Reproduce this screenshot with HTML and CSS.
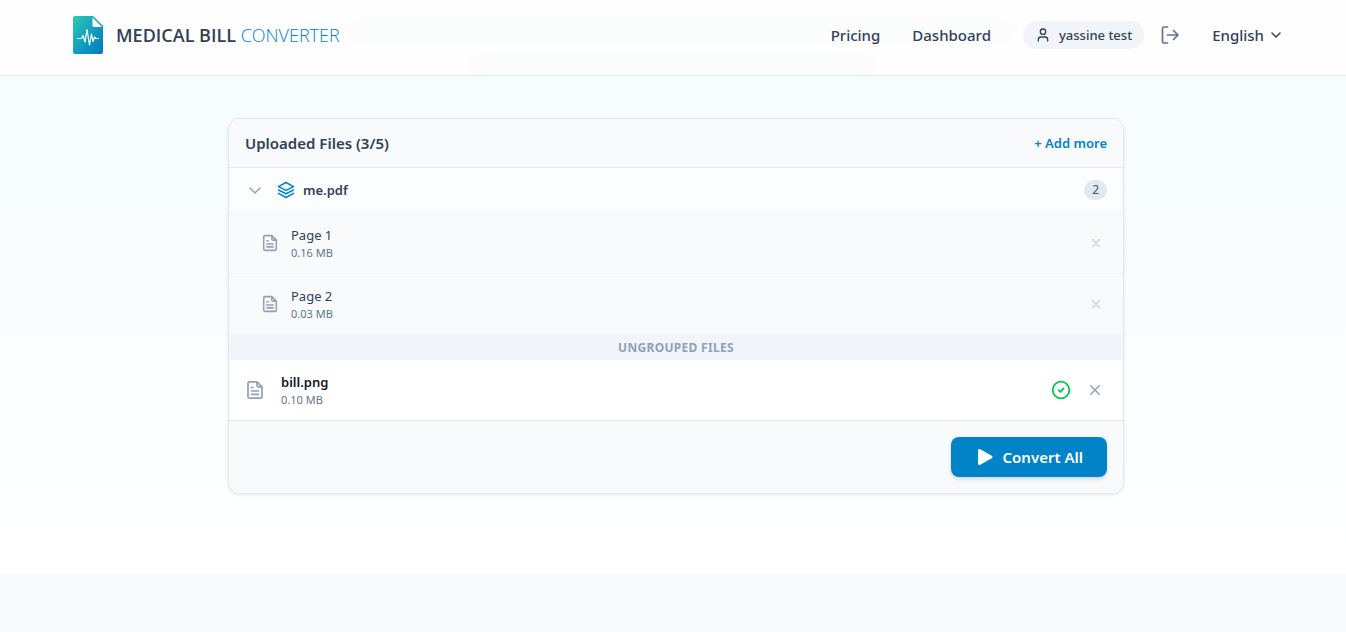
FILE: index.html
```html
<!DOCTYPE html>
<html lang="en">
    <head>
        <meta charset="utf-8">
        <meta name="viewport" content="width=device-width, initial-scale=1">
        <title>Medical Bill Converter</title>
        <link rel="stylesheet" href="styles.css">
    </head>
    <body>
        <header class="header">
            <div class="header-inner">
                <a class="logo" href="#">
                    <svg class="logo-icon" width="32" height="40" viewBox="0 0 32 40" aria-hidden="true">
                        <defs>
                            <linearGradient id="logoFill" x1="0" y1="0" x2="1" y2="1">
                                <stop offset="0" stop-color="#2dcbb4"/>
                                <stop offset="0.5" stop-color="#12a0bd"/>
                                <stop offset="1" stop-color="#0277c8"/>
                            </linearGradient>
                        </defs>
                        <path d="M3 1h18l10 10v26a2 2 0 0 1-2 2H3a2 2 0 0 1-2-2V3a2 2 0 0 1 2-2z" fill="url(#logoFill)"/>
                        <path d="M20.500 2.500v8a1.500 1.500 0 0 0 1.500 1.500h8z" fill="#ffffff"/>
                        <path d="M5.500 23.500H9.500L11 20.500 13 27 15 14.500 17.500 30 19.500 19 21 26.500 22.500 22 24 23.500H26.500" fill="none" stroke="#ffffff" stroke-width="1.200" stroke-linecap="round" stroke-linejoin="round"/>
                    </svg>
                    <span class="logo-text">MEDICAL BILL <span class="logo-light">CONVERTER</span></span>
                </a>
                <nav class="nav">
                    <a class="nav-link" href="#">Pricing</a>
                    <a class="nav-link" href="#">Dashboard</a>
                    <div class="account">
                        <a class="user" href="#">
                            <svg width="16" height="16" viewBox="0 0 24 24" class="icon" aria-hidden="true">
                                <path d="M19 21v-2a4 4 0 0 0-4-4H9a4 4 0 0 0-4 4v2"/>
                                <circle cx="12" cy="7" r="4"/>
                            </svg>
                            yassine test
                        </a>
                        <button class="logout" aria-label="Log out">
                            <svg width="20" height="20" viewBox="0 0 20 20" class="icon" aria-hidden="true">
                                <path d="M7.500 2H4a1.500 1.500 0 0 0-1.500 1.500v13A1.500 1.500 0 0 0 4 18h3.500M7.500 10H18M13.500 5.500L18 10l-4.500 4.500"/>
                            </svg>
                        </button>
                    </div>
                    <button class="language">
                        English
                        <svg width="16" height="16" viewBox="0 0 16 16" class="icon" aria-hidden="true">
                            <path d="M4 6l4 4 4-4"/>
                        </svg>
                    </button>
                </nav>
            </div>
        </header>

        <main class="main">
            <section class="card">
                <div class="card-header">
                    <h2 class="card-title">Uploaded Files (3/5)</h2>
                    <button class="add-more">+ Add more</button>
                </div>

                <div class="group">
                    <button class="toggle" aria-label="Collapse me.pdf">
                        <svg width="20" height="20" viewBox="0 0 20 20" class="icon" aria-hidden="true">
                            <path d="M5 8l5 5 5-5"/>
                        </svg>
                    </button>
                    <svg width="18" height="18" viewBox="0 0 24 24" class="icon layers" aria-hidden="true">
                        <path d="M12 2L22 7.500 12 12.500 2 7.500z"/>
                        <path d="M2 12l10 5 10-5"/>
                        <path d="M2 16.500l10 5.500 10-5.500"/>
                    </svg>
                    <span class="group-name">me.pdf</span>
                    <span class="count">2</span>
                </div>

                <ul class="files pages">
                    <li class="file">
                        <svg width="18" height="18" viewBox="0 0 20 20" class="icon doc" aria-hidden="true">
                            <path d="M12 1.800H4.500A1.500 1.500 0 0 0 3 3.300v13.400a1.500 1.500 0 0 0 1.500 1.500h11a1.500 1.500 0 0 0 1.500-1.500V6.800zM12 1.800v3.500a1.500 1.500 0 0 0 1.500 1.500H17M6.500 7.500H8M6.500 11h7M6.500 14.300h7"/>
                        </svg>
                        <div class="file-info">
                            <p class="file-name">Page 1</p>
                            <p class="file-size">0.16 MB</p>
                        </div>
                        <button class="remove" aria-label="Remove page 1">
                            <svg width="14" height="14" viewBox="0 0 14 14" class="icon" aria-hidden="true">
                                <path d="M3.500 3.500l7 7M10.500 3.500l-7 7"/>
                            </svg>
                        </button>
                    </li>
                    <li class="file">
                        <svg width="18" height="18" viewBox="0 0 20 20" class="icon doc" aria-hidden="true">
                            <path d="M12 1.800H4.500A1.500 1.500 0 0 0 3 3.300v13.400a1.500 1.500 0 0 0 1.500 1.500h11a1.500 1.500 0 0 0 1.500-1.500V6.800zM12 1.800v3.500a1.500 1.500 0 0 0 1.500 1.500H17M6.500 7.500H8M6.500 11h7M6.500 14.300h7"/>
                        </svg>
                        <div class="file-info">
                            <p class="file-name">Page 2</p>
                            <p class="file-size">0.03 MB</p>
                        </div>
                        <button class="remove" aria-label="Remove page 2">
                            <svg width="14" height="14" viewBox="0 0 14 14" class="icon" aria-hidden="true">
                                <path d="M3.500 3.500l7 7M10.500 3.500l-7 7"/>
                            </svg>
                        </button>
                    </li>
                </ul>

                <h3 class="divider">UNGROUPED FILES</h3>

                <ul class="files">
                    <li class="file">
                        <svg width="20" height="20" viewBox="0 0 20 20" class="icon doc" aria-hidden="true">
                            <path d="M12 1.800H4.500A1.500 1.500 0 0 0 3 3.300v13.400a1.500 1.500 0 0 0 1.500 1.500h11a1.500 1.500 0 0 0 1.500-1.500V6.800zM12 1.800v3.500a1.500 1.500 0 0 0 1.500 1.500H17M6.500 7.500H8M6.500 11h7M6.500 14.300h7"/>
                        </svg>
                        <div class="file-info">
                            <p class="file-name">bill.png</p>
                            <p class="file-size">0.10 MB</p>
                        </div>
                        <svg width="20" height="20" viewBox="0 0 20 20" class="icon done" role="img" aria-label="Uploaded">
                            <circle cx="10" cy="10" r="8.300"/>
                            <path d="M7.500 10.200l1.800 1.600 3.200-3.300"/>
                        </svg>
                        <button class="remove" aria-label="Remove bill.png">
                            <svg width="16" height="16" viewBox="0 0 16 16" class="icon" aria-hidden="true">
                                <path d="M3.800 3.800l8.400 8.400M12.200 3.800l-8.400 8.400"/>
                            </svg>
                        </button>
                    </li>
                </ul>

                <div class="card-footer">
                    <button class="convert">
                        <svg width="20" height="20" viewBox="0 0 20 20" aria-hidden="true">
                            <path d="M4.500 3.500v13l11.500-6.500z" fill="#ffffff" stroke="#ffffff" stroke-width="3" stroke-linejoin="round"/>
                        </svg>
                        Convert All
                    </button>
                </div>
            </section>
        </main>
    </body>
</html>
```

FILE: styles.css
```css
* {
    box-sizing: border-box;
}
body {
    margin: 0;
    min-height: 100vh;
    background-color: #f8fafc;
    color: #314158;
    font-family: "Segoe UI", "Noto Sans", "Open Sans", sans-serif;
    font-size: 15px;
}
a {
    color: inherit;
    text-decoration: none;
}
button {
    padding: 0;
    border: none;
    background: none;
    color: inherit;
    font: inherit;
    cursor: pointer;
}
h2, h3, p, ul {
    margin: 0;
    padding: 0;
}
ul {
    list-style: none;
}
svg {
    display: block;
    flex-shrink: 0;
}
.icon {
    fill: none;
    stroke: currentColor;
    stroke-width: 1.5;
    stroke-linecap: round;
    stroke-linejoin: round;
}

/* header */
.header {
    position: relative;
    overflow: hidden;
    padding-left: 6px;
    background-color: #fefefe;
    border-bottom: 1px solid #e2e8f0;
}
.header::before {
    content: "";
    position: absolute;
    top: 0;
    bottom: 0;
    left: 26%;
    right: 25%;
    background:
        linear-gradient(#f9fafb, #f9fafb) 0 24px / 100% 14px no-repeat,
        linear-gradient(#f9fafb, #f9fafb) 47% 58px / 60% 14px no-repeat;
    filter: blur(6px);
}
.header-inner {
    position: relative;
    display: flex;
    align-items: center;
    justify-content: space-between;
    max-width: 1280px;
    height: 75px;
    margin: 0 auto;
    padding: 0 32px 6px 36px;
}
.logo {
    display: flex;
    align-items: center;
    gap: 12px;
}
.logo-text {
    font-family: "Segoe UI", "Open Sans", sans-serif;
    font-size: 18px;
    font-weight: 600;
}
.logo-light {
    color: #0084c7;
    font-weight: 300;
}
.nav {
    display: flex;
    align-items: center;
    gap: 32px;
    font-weight: 500;
}
.account {
    display: flex;
    align-items: center;
    gap: 16px;
}
.user {
    display: flex;
    align-items: center;
    gap: 8px;
    height: 28px;
    padding: 0 12px;
    border-radius: 14px;
    background-color: #f1f5f9;
    font-size: 13px;
}
.user .icon {
    stroke-width: 2;
}
.logout {
    color: #62748e;
}
.logout .icon, .doc {
    stroke-width: 1.7;
}
.language {
    display: flex;
    align-items: center;
    gap: 4px;
}

/* upload card */
.main {
    min-height: 498px;
    padding: 42px 16px 80px 22px;
    background-image: linear-gradient(#f6fcff, #ffffff);
}
.card {
    max-width: 896px;
    margin: 0 auto;
    overflow: hidden;
    border: 1px solid #e2e8f0;
    border-radius: 12px;
    background-color: #ffffff;
    box-shadow: 0 1px 3px rgba(0, 0, 0, 0.1);
}
.card-header {
    display: flex;
    align-items: center;
    justify-content: space-between;
    height: 49px;
    padding: 0 16px;
    border-bottom: 1px solid #e2e8f0;
    background-color: #f8fafc;
}
.card-title {
    font-size: 15px;
    font-weight: 600;
}
.add-more {
    color: #0084c7;
    font-size: 13px;
    font-weight: 600;
}
.group {
    display: flex;
    align-items: center;
    gap: 8px;
    height: 45px;
    padding: 0 16px;
    border-bottom: 1px solid #f1f5f9;
    background-color: #fcfdfe;
    font-size: 13px;
}
.toggle {
    margin-right: 4px;
    color: #90a1b9;
}
.layers {
    stroke-width: 2;
    color: #0084c7;
}
.group-name {
    flex: 1;
    font-weight: 600;
}
.count {
    padding: 0 8px;
    border-radius: 10px;
    background-color: #e2e8f0;
    color: #45556c;
    font-size: 12px;
    line-height: 20px;
}
.file {
    display: flex;
    align-items: center;
    gap: 16px;
    height: 60px;
    padding: 0 20px 0 16px;
}
.file-info {
    flex: 1;
}
.file-name {
    color: #0f172b;
    font-size: 13px;
    font-weight: 600;
    line-height: 20px;
}
.file-size {
    color: #62748e;
    font-size: 11px;
    line-height: 16px;
}
.doc, .remove {
    color: #90a1b9;
}
.done {
    stroke-width: 1.8;
    color: #00c950;
}
.pages .file {
    gap: 12px;
    padding-left: 32px;
    background-color: #f8fafc;
}
.pages .file + .file {
    height: 61px;
    border-top: 1px solid #f1f5f9;
}
.pages .file-name {
    color: #314158;
    font-weight: 400;
}
.pages .remove {
    color: #cad5e2;
}
.divider {
    padding-top: 2px;
    background-color: #f1f5f9;
    color: #90a1b9;
    font-size: 12px;
    font-weight: 700;
    letter-spacing: 0.3px;
    line-height: 24px;
    text-align: center;
}
.card-footer {
    display: flex;
    justify-content: flex-end;
    padding: 16px;
    border-top: 1px solid #e2e8f0;
    background-color: #f8fafc;
}
.convert {
    display: flex;
    align-items: center;
    gap: 8px;
    height: 40px;
    padding: 0 24px;
    border-radius: 8px;
    background-color: #0084c7;
    box-shadow: 0 2px 4px rgba(0, 0, 0, 0.15);
    color: #ffffff;
    font-weight: 600;
}
```
